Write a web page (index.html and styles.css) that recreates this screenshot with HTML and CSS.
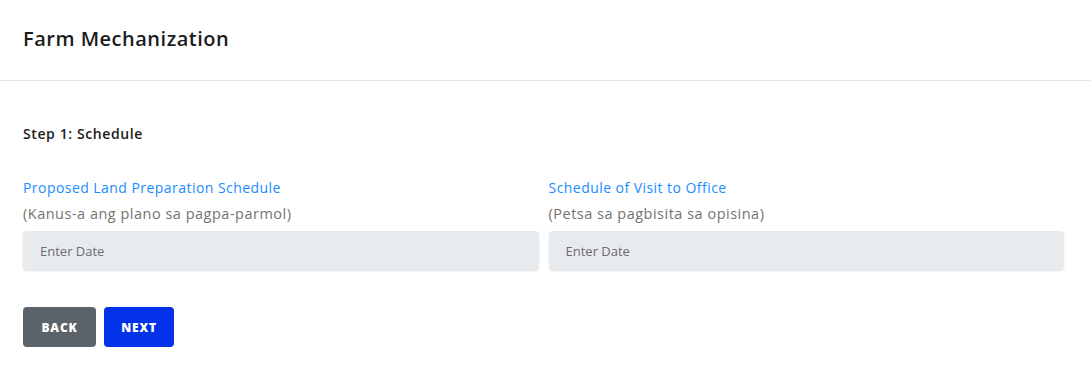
FILE: index.html
```html
<!DOCTYPE html>
<html lang="en">

<head>
    <meta charset="UTF-8">
    <meta name="viewport" content="width=device-width, initial-scale=1.0">
    <title>Farm Mechanization</title>
    <link rel="stylesheet" href="styles.css">
</head>

<body>

    <div class="header">
        <h1 class="title">Farm Mechanization</h1>
    </div>

    <div class="content">
        <h2 class="step">Step 1: Schedule</h2>

        <div class="fields">
            <div class="field">
                <label class="label">Proposed Land Preparation Schedule</label>
                <div class="hint">(Kanus-a ang plano sa pagpa-parmol)</div>
                <input class="date-input" type="text" placeholder="Enter Date">
            </div>
            <div class="field">
                <label class="label">Schedule of Visit to Office</label>
                <div class="hint">(Petsa sa pagbisita sa opisina)</div>
                <input class="date-input" type="text" placeholder="Enter Date">
            </div>
        </div>

        <div class="actions">
            <button class="btn btn-back">BACK</button>
            <button class="btn btn-next">NEXT</button>
        </div>
    </div>

</body>

</html>
```

FILE: styles.css
```css
html,
body {
    margin: 0;
}

body {
    font-family: "Open Sans", "Noto Sans", sans-serif;
    color: #212529;
    background: #fff;
}

.header {
    height: 77px;
    padding: 0 23px 3px;
    border-bottom: 1px solid #e4e4e4;
    display: flex;
    align-items: center;
}

.title {
    margin: 0;
    font-size: 20px;
    font-weight: 600;
    color: #1c1c1c;
    letter-spacing: 0.5px;
}

.content {
    padding: 0 27px 0 23px;
}

.step {
    margin: 43px 0 0;
    font-size: 14px;
    font-weight: 600;
    line-height: 20px;
    color: #1c1c1c;
    letter-spacing: 0.6px;
}

.fields {
    display: flex;
    gap: 10px;
    margin-top: 36px;
}

.field {
    flex: 1;
    display: flex;
    flex-direction: column;
}

.label {
    font-size: 14px;
    line-height: 16px;
    color: #1a8cff;
    letter-spacing: 0.45px;
}

.hint {
    margin-top: 10px;
    font-size: 14.5px;
    line-height: 16px;
    color: #77726c;
    letter-spacing: 0.5px;
}

.date-input {
    margin-top: 9px;
    height: 39px;
    border: none;
    border-radius: 4px;
    background: #e8ebee;
    box-shadow: 0 1px 2px rgba(0, 0, 0, 0.12);
    padding: 0 17px;
    font-family: inherit;
    font-size: 13px;
    outline: none;
}

.date-input::placeholder {
    color: #6c6c70;
}

.actions {
    display: flex;
    gap: 8px;
    margin-top: 37px;
}

.btn {
    height: 40px;
    border: none;
    border-radius: 4px;
    color: #fff;
    font-family: inherit;
    font-size: 12px;
    font-weight: 800;
    letter-spacing: 0.8px;
    padding: 0;
}

.btn-back {
    width: 73px;
    background: #5c636a;
}

.btn-next {
    width: 70px;
    background: #0432e8;
}
```
